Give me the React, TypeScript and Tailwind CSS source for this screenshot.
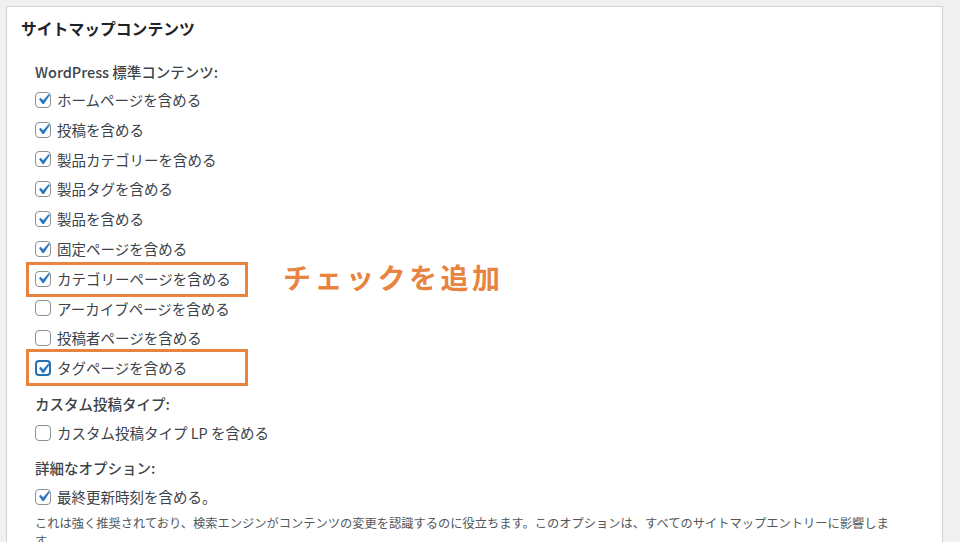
import React from 'react'

const font = { fontFamily: '"Noto Sans CJK JP", "Noto Sans", sans-serif' }

type Item = { label: string; checked: boolean; focus?: boolean; mark?: 'a' | 'b' }

const standard: Item[] = [
  { label: 'ホームページを含める', checked: true },
  { label: '投稿を含める', checked: true },
  { label: '製品カテゴリーを含める', checked: true },
  { label: '製品タグを含める', checked: true },
  { label: '製品を含める', checked: true },
  { label: '固定ページを含める', checked: true },
  { label: 'カテゴリーページを含める', checked: true, mark: 'a' },
  { label: 'アーカイブページを含める', checked: false },
  { label: '投稿者ページを含める', checked: false },
  { label: 'タグページを含める', checked: true, focus: true, mark: 'b' },
]

function Box({ checked, focus }: { checked: boolean; focus?: boolean }) {
  return (
    <span
      className={
        'w-4 h-4 rounded-[4px] bg-white flex items-center justify-center shrink-0 ' +
        (focus ? 'border-2 border-[#2271b1]' : 'border border-[#8c8f94]')
      }
    >
      {checked && (
        <svg width="21" height="21" viewBox="0 0 20 20" className="shrink-0 -m-[3px]">
          <path d="M14.83 4.89l1.34.94-5.81 8.38H9.02L5.78 9.67l1.34-1.25 2.57 2.4z" fill="#2c79c0" />
        </svg>
      )}
    </span>
  )
}

function Row({ item }: { item: Item }) {
  return (
    <div className="relative flex items-center gap-[6px] h-[29.8px]">
      <Box checked={item.checked} focus={item.focus} />
      <span className="text-[14.5px] text-[#3c434a]">{item.label}</span>
      {item.mark === 'a' && (
        <>
          <div className="absolute left-[-9px] top-[-2px] w-[222px] h-[35px] border-[3px] border-[#e8843f]" />
          <div className="absolute left-[248px] top-[-1px] text-[28px] font-bold tracking-[3.5px] text-[#e8843f] leading-none">
            チェックを追加
          </div>
        </>
      )}
      {item.mark === 'b' && (
        <div className="absolute left-[-9px] top-[-4px] w-[222px] h-[37px] border-[3px] border-[#e8843f]" />
      )}
    </div>
  )
}

export default function App() {
  return (
    <div className="w-[960px] h-[542px] overflow-hidden bg-[#f0f0f1] pl-[6px] pt-[6px]" style={font}>
      <div className="w-[937px] h-[560px] bg-white border border-[#d0d2d4] shadow-[0_1px_1px_rgba(0,0,0,0.04)] pl-[14px]">
        <h2 className="text-[15.8px] font-bold text-[#1d2327] h-[42px] flex items-center pt-[1px]">
          サイトマップコンテンツ
        </h2>
        <div className="pl-[14px]">
          <p className="text-[14.5px] font-medium text-[#3c434a] h-[35px] flex items-end pb-[1px]">
            WordPress 標準コンテンツ:
          </p>
          <div className="pt-[1px]">
            {standard.map(i => (
              <Row key={i.label} item={i} />
            ))}
          </div>
          <p className="text-[14.5px] font-medium text-[#3c434a] h-[35px] flex items-end pb-[3px]">
            カスタム投稿タイプ:
          </p>
          <Row item={{ label: 'カスタム投稿タイプ LP を含める', checked: false }} />
          <p className="text-[14.5px] font-medium text-[#3c434a] h-[34px] flex items-end pb-[3px]">
            詳細なオプション:
          </p>
          <Row item={{ label: '最終更新時刻を含める。', checked: true }} />
          <p className="text-[12.25px] text-[#50575e] leading-[18px] w-[864px] mt-[2px]">
            これは強く推奨されており、検索エンジンがコンテンツの変更を認識するのに役立ちます。このオプションは、すべてのサイトマップエントリーに影響します。
          </p>
        </div>
      </div>
    </div>
  )
}
